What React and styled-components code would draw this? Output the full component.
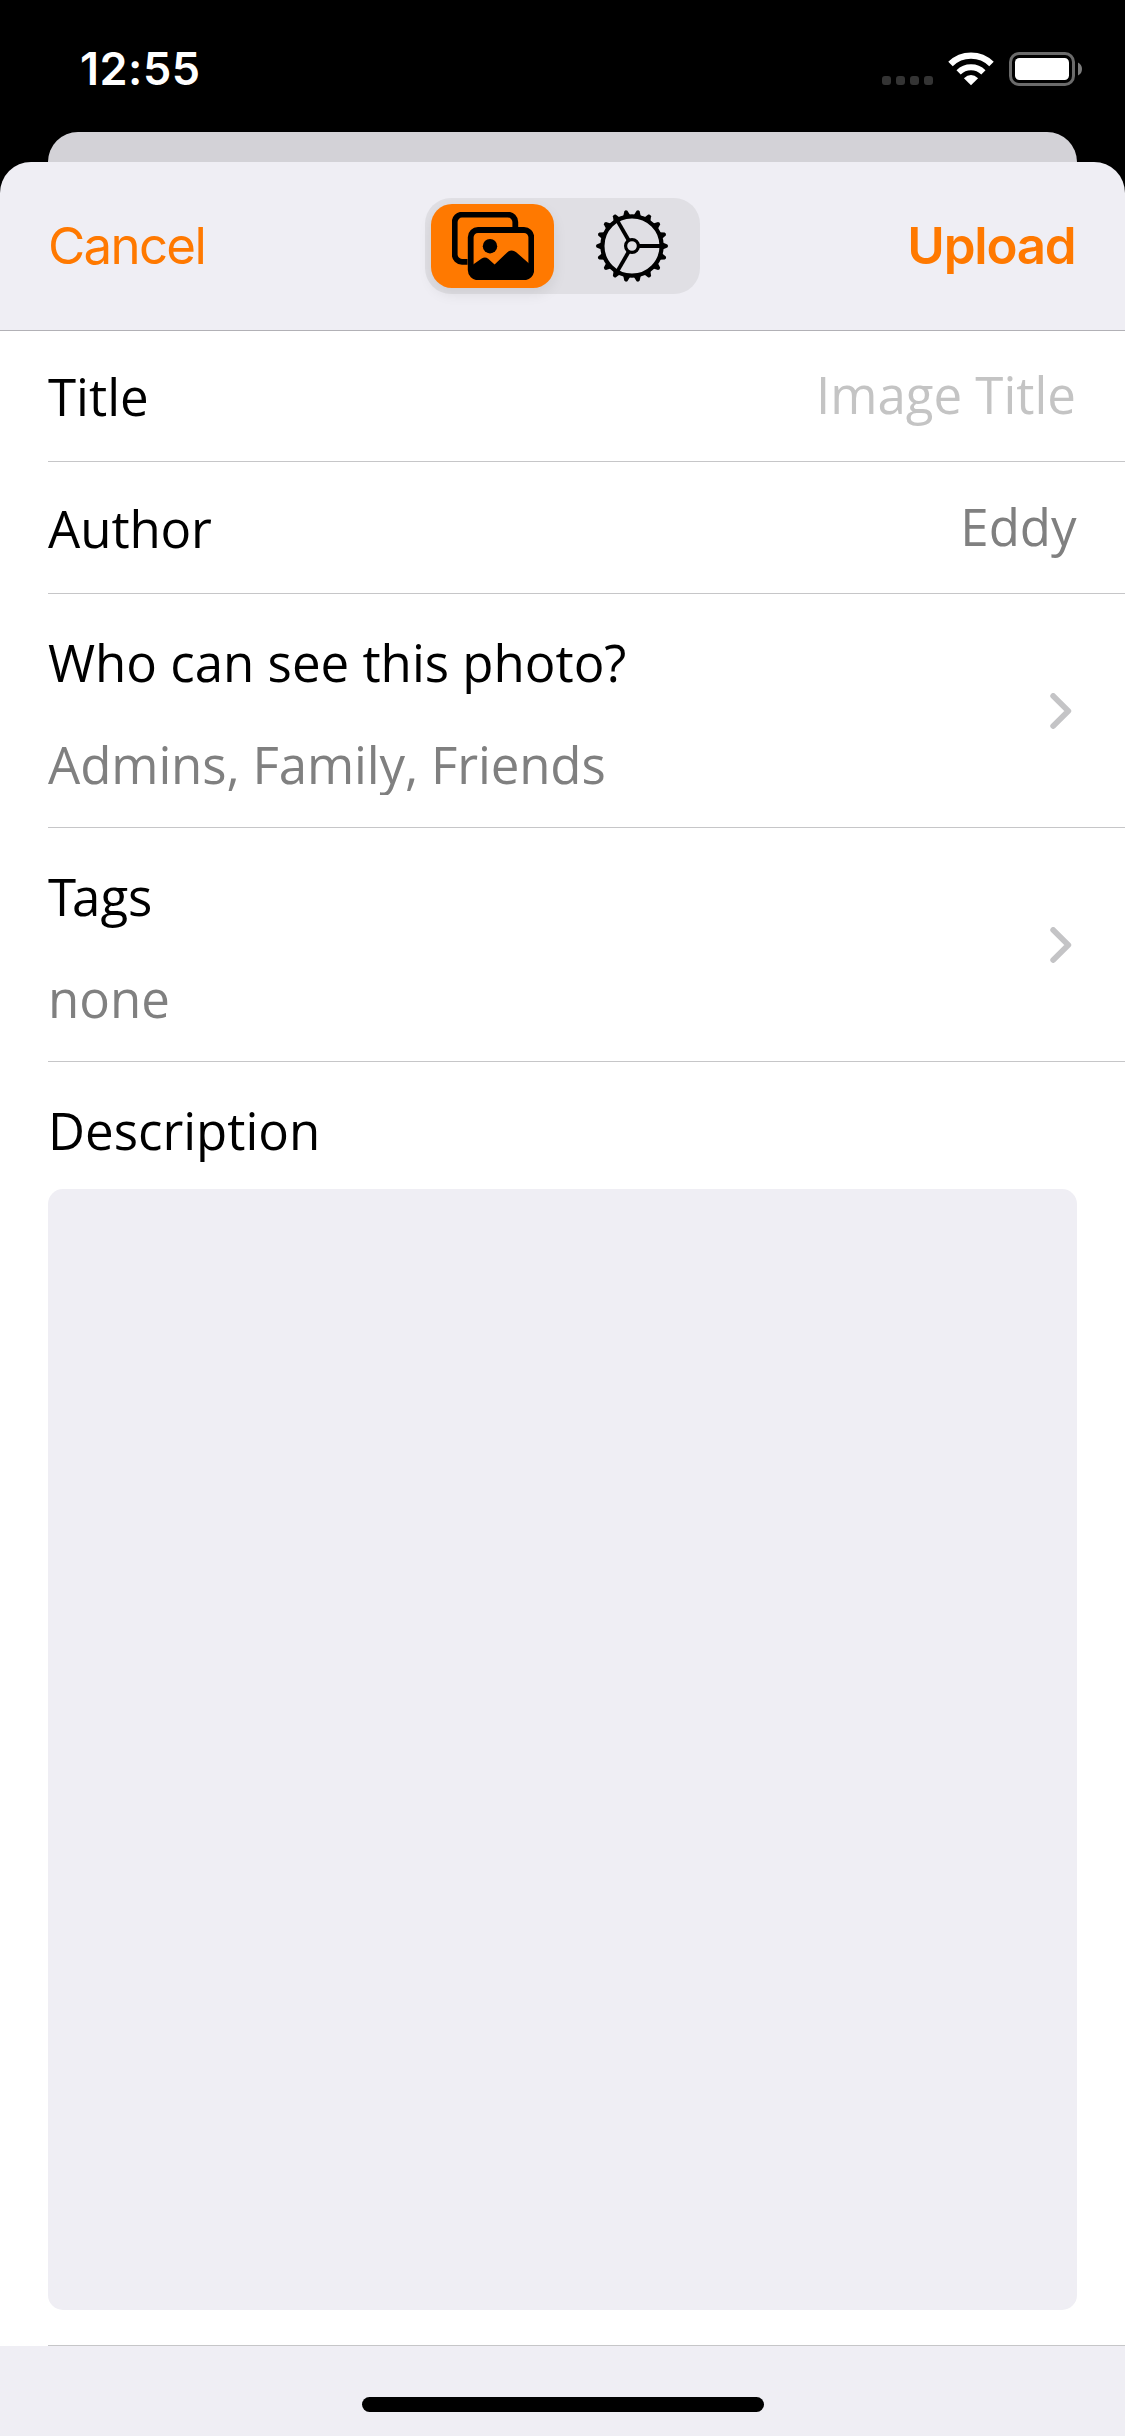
import React from "react";
import styled, { createGlobalStyle } from "styled-components";

const GlobalStyle = createGlobalStyle`
  * { box-sizing: border-box; }
  body { margin: 0; background: #000; }
`;

const systemFont = `Inter, "Liberation Sans", sans-serif`;
const bodyFont = `"Open Sans", "Noto Sans", sans-serif`;

const Screen = styled.main`
  width: 1125px;
  height: 2436px;
  display: flex;
  flex-direction: column;
  background: #000;
  font-family: ${bodyFont};
  overflow: hidden;
`;

const StatusBar = styled.header`
  height: 132px;
  flex: none;
  display: flex;
  justify-content: space-between;
  align-items: flex-start;
  padding: 42px 43px 0 80px;
`;

const Clock = styled.time`
  font: 600 45px/54px ${systemFont};
  letter-spacing: 0.5px;
  color: #fff;
`;

const StatusIcons = styled.div`
  display: flex;
  align-items: flex-end;
  height: 44px;
`;

const Cellular = styled.div`
  display: flex;
  gap: 5px;
  margin: 0 15px 1px 0;
`;

const Dot = styled.i`
  width: 9px;
  height: 9px;
  border-radius: 3px;
  background: #343434;
`;

const WifiIcon = styled.svg`
  width: 46px;
  height: 34px;
  margin-right: 15px;
`;

const BatteryIcon = styled.svg`
  width: 73px;
  height: 34px;
`;

const BackCard = styled.div`
  height: 30px;
  flex: none;
  margin: 0 48px;
  border-radius: 30px 30px 0 0;
  background: #d3d2d7;
`;

const Sheet = styled.section`
  flex: 1;
  display: flex;
  flex-direction: column;
  border-radius: 31px 31px 0 0;
  background: #efeef4;
  overflow: hidden;
`;

const NavBar = styled.nav`
  height: 169px;
  flex: none;
  display: grid;
  grid-template-columns: 1fr 275px 1fr;
  align-items: center;
  padding: 0 48px;
  border-bottom: 1px solid #b2b1b6;
`;

const NavButton = styled.button`
  justify-self: ${(p) => (p.$end ? "end" : "start")};
  padding: ${(p) => (p.$end ? "0 1.5px 0 0" : "0")};
  border: 0;
  background: none;
  color: #ff7900;
  font: ${(p) => (p.$strong ? 600 : 400)} 51px/62px ${systemFont};
  letter-spacing: ${(p) => (p.$strong ? "-1.2px" : "-1.7px")};
`;

const Segments = styled.div`
  display: flex;
  height: 96px;
  padding: 6px;
  gap: 16px;
  border-radius: 26px;
  background: #e0dfe4;
`;

const Segment = styled.button`
  width: 123px;
  height: 84px;
  padding: 0;
  border: 0;
  display: flex;
  align-items: center;
  justify-content: center;
  border-radius: 21px;
  background: ${(p) => (p.$active ? "#ff7900" : "transparent")};
  box-shadow: ${(p) => (p.$active ? "0 6px 14px rgba(0,0,0,0.08)" : "none")};
`;

const SegmentIcon = styled.svg`
  width: ${(p) => p.$width}px;
  height: ${(p) => p.$height}px;
  display: block;
`;

const Form = styled.div`
  height: 2015px;
  flex: none;
  display: flex;
  flex-direction: column;
  padding-left: 48px;
  background: #fff;
`;

const Row = styled.div`
  height: ${(p) => p.$height}px;
  flex: none;
  display: flex;
  justify-content: space-between;
  align-items: center;
  padding-right: ${(p) => p.$inset || 48}px;
  border-bottom: 1px solid #c6c6c8;
`;

const Label = styled.span`
  display: block;
  font-size: 51px;
  line-height: 70px;
  color: #000;
  white-space: nowrap;
  letter-spacing: ${(p) => p.$tracking || 0}px;

  &::first-letter {
    letter-spacing: ${(p) => p.$firstKern || 0}px;
  }
`;

const Value = styled(Label)`
  color: ${(p) => (p.$placeholder ? "#c4c4c4" : "#808080")};
  padding: 0 ${(p) => (p.$placeholder ? 1 : 0.4)}px 4px 0;
`;

const Stack = styled.div`
  display: flex;
  flex-direction: column;
  align-self: flex-start;
  padding-top: 33px;
  gap: 32px;
`;

const Detail = styled(Label)`
  color: #808080;
  height: 66px;
  overflow: ${(p) => (p.$clip ? "hidden" : "visible")};
`;

const ChevronIcon = styled.svg`
  width: 22px;
  height: 36px;
`;

const DescriptionBlock = styled.div`
  flex: 1;
  display: flex;
  flex-direction: column;
  gap: 24px;
  padding: 33px 48px 35px 0;
  border-bottom: 1px solid #c6c6c8;
`;

const DescriptionField = styled.div`
  flex: 1;
  border-radius: 15px;
  background: #efeef4;
`;

const HomeArea = styled.footer`
  flex: 1;
  display: flex;
  justify-content: center;
  padding-top: 51px;
`;

const HomeIndicator = styled.div`
  width: 402px;
  height: 15px;
  border-radius: 8px;
  background: #000;
`;

const Chevron = () => (
  <ChevronIcon viewBox="0 0 22 36" fill="none">
    <path d="M3.2 3 18.3 18 3.2 33" stroke="#c4c4c6" strokeWidth="5.8" strokeLinecap="round" strokeLinejoin="round" />
  </ChevronIcon>
);

const Wifi = () => (
  <WifiIcon viewBox="0 0 46 34" fill="none">
    <path d="M2.5 12.4 A29.3 29.3 0 0 1 43.5 12.4" stroke="#fff" strokeWidth="6.4" transform="translate(0 -.4)" />
    <path d="M10.6 20.4 A17.6 17.6 0 0 1 35.4 20.4" stroke="#fff" strokeWidth="6" />
    <path d="M15.9 26.2 Q23 20 30.1 26.2 L23 33.2Z" fill="#fff" />
  </WifiIcon>
);

const Battery = () => (
  <BatteryIcon viewBox="0 0 73 34">
    <rect x="1.5" y="1.5" width="63" height="31" rx="8.5" fill="none" stroke="#6b6b6b" strokeWidth="3" />
    <rect x="6" y="6" width="54" height="22" rx="4.5" fill="#fff" />
    <path d="M69 10.5 Q73 12.5 73 17 Q73 21.5 69 23.5Z" fill="#7c7c7c" />
  </BatteryIcon>
);

const Photos = () => (
  <SegmentIcon $width={82} $height={68} viewBox="0 0 82 68" fill="none">
    <path
      d="M15.5 49.8 H10 A7.3 7.3 0 0 1 2.7 42.5 V10 A7.3 7.3 0 0 1 10 2.7 H56 A7.3 7.3 0 0 1 63.3 10 V17"
      stroke="#000"
      strokeWidth="5.8"
    />
    <rect x="18.7" y="18" width="60.6" height="47.3" rx="7.3" stroke="#000" strokeWidth="5.8" />
    <circle cx="38" cy="34.2" r="7.2" fill="#000" />
    <path
      d="M19 54 L29.7 46.6 Q33 44.3 36.2 46.8 L42.6 52.4 L55.4 40.2 Q59.8 37 64.2 40.2 L79 53.3 V59 Q79 65.5 72 65.5 H26 Q19 65.5 19 59Z"
      fill="#000"
    />
  </SegmentIcon>
);

const teeth = Array.from({ length: 18 }, (_, i) => i * 20);

const Gear = () => (
  <SegmentIcon $width={74} $height={74} viewBox="-37 -37 74 74" fill="none" stroke="#000">
    <circle r="29.6" strokeWidth="4.2" />
    {teeth.map((angle) => (
      <path key={angle} d="M30 -3.8 L35.4 -1.6 Q36.9 0 35.4 1.6 L30 3.8Z" fill="#000" stroke="none" transform={`rotate(${angle})`} />
    ))}
    <circle r="6.4" strokeWidth="3.2" />
    {[0, 120, 240].map((angle) => (
      <path key={angle} d="M7 0H29" strokeWidth="3.8" transform={`rotate(${angle})`} />
    ))}
  </SegmentIcon>
);

export default function App() {
  return (
    <Screen>
      <GlobalStyle />
      <StatusBar>
        <Clock>12:55</Clock>
        <StatusIcons>
          <Cellular>
            <Dot />
            <Dot />
            <Dot />
            <Dot />
          </Cellular>
          <Wifi />
          <Battery />
        </StatusIcons>
      </StatusBar>
      <BackCard />
      <Sheet>
        <NavBar>
          <NavButton>Cancel</NavButton>
          <Segments>
            <Segment $active aria-label="Photos">
              <Photos />
            </Segment>
            <Segment aria-label="Settings">
              <Gear />
            </Segment>
          </Segments>
          <NavButton $end $strong>
            Upload
          </NavButton>
        </NavBar>
        <Form>
          <Row $height={131}>
            <Label>Title</Label>
            <Value $placeholder>Image Title</Value>
          </Row>
          <Row $height={132}>
            <Label $tracking={-0.15}>Author</Label>
            <Value>Eddy</Value>
          </Row>
          <Row $height={234} $inset={53}>
            <Stack>
              <Label>Who can see this photo?</Label>
              <Detail $clip $tracking={-0.14}>Admins, Family, Friends</Detail>
            </Stack>
            <Chevron />
          </Row>
          <Row $height={234} $inset={53}>
            <Stack>
              <Label $firstKern={-4}>Tags</Label>
              <Detail>none</Detail>
            </Stack>
            <Chevron />
          </Row>
          <DescriptionBlock>
            <Label>Description</Label>
            <DescriptionField />
          </DescriptionBlock>
        </Form>
        <HomeArea>
          <HomeIndicator />
        </HomeArea>
      </Sheet>
    </Screen>
  );
}
